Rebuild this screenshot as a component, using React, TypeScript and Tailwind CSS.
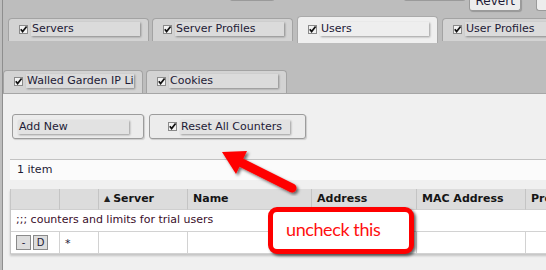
import clsx from 'clsx';

// small checked checkbox used in tabs and buttons
const Check = () => (
  <svg width="9" height="9" viewBox="0 0 9 9" className="shrink-0">
    <rect x="0.5" y="0.5" width="8" height="8" fill="#f2f2f2" stroke="#8a8a8a" />
    <path d="M1.8 4.2 L3.6 6.6 L7.6 1.4" fill="none" stroke="#111" strokeWidth="1.7" />
  </svg>
);

const Label = ({ children, className }: { children: React.ReactNode; className?: string }) => (
  <span
    className={clsx(
      'block h-[14px] leading-[14px] pl-[1px] overflow-hidden whitespace-nowrap shadow-[1px_1px_2px_rgba(0,0,0,0.35)]',
      className
    )}
  >
    {children}
  </span>
);

interface TabProps {
  label: string;
  active?: boolean;
  className?: string;
}

const Tab = ({ label, active = false, className }: TabProps) => (
  <div
    className={clsx(
      'shrink-0 flex items-start rounded-t-[4px] border border-b-0 pl-[10px] pr-[8px]',
      active
        ? 'h-[27px] pt-[5px] bg-[#efefef] border-[#aaaaaa]'
        : 'h-[23px] mt-[2px] pt-[3px] bg-[#d3d3d3] border-[#a3a3a3]',
      className
    )}
  >
    <span className="mt-[3px]">
      <Check />
    </span>
    <Label className={clsx('ml-[3px] flex-1', active ? 'bg-[#eeeeee]' : 'bg-[#dbdbdb]')}>{label}</Label>
  </div>
);

const COLUMNS = ['', '', 'Server', 'Name', 'Address', 'MAC Address', 'Profile'];

export default function App() {
  return (
    <div className="relative w-[546px] h-[270px] overflow-hidden bg-[#bdbdbd] font-['DejaVu_Sans',sans-serif] text-[11px] text-[#1d1a36]">
      <div className="ml-[2px] h-full border-l border-[#8e8e8e] flex flex-col">
        {/* Toolbar (cut off at the top) */}
        <div className="h-[16px] flex items-start">
          <div className="ml-[227px] w-[46px] h-[2px] -mt-[1px] bg-[#e6e6e6] border border-t-0 border-[#9a9a9a] rounded-b-[3px]" />
          <div className="ml-[130px] w-[64px] h-[2px] -mt-[1px] bg-[#e6e6e6] border border-t-0 border-[#9a9a9a] rounded-b-[3px]" />
          <div className="ml-[4px] w-[55px] h-[12px] -mt-[1px] bg-[#ededed] border border-t-0 border-[#9a9a9a] rounded-b-[3px] shadow-[1px_1px_1px_rgba(0,0,0,0.2)] flex justify-center">
            <span className="-mt-[7px] text-[12px]">Revert</span>
          </div>
          <div className="ml-[15px] w-[10px] h-[12px] -mt-[1px] bg-[#ededed] border border-t-0 border-r-0 border-[#9a9a9a] rounded-bl-[3px]" />
        </div>

        {/* First tab row */}
        <div className="h-[27px] flex items-start gap-[3px] pl-[5px]">
          <Tab label="Servers" className="w-[141px]" />
          <Tab label="Server Profiles" className="w-[141px]" />
          <Tab label="Users" active className="w-[141px] ml-[1px]" />
          <Tab label="User Profiles" className="w-[141px] ml-[1px]" />
        </div>

        <div className="h-[27px]" />

        {/* Second tab row */}
        <div className="h-[23px] flex items-end gap-[3px]">
          <Tab label="Walled Garden IP List" className="w-[140px] !mt-0" />
          <Tab label="Cookies" className="w-[141px] !mt-0" />
        </div>

        {/* Panel */}
        <div className="flex-1 bg-[#f0f0f0] border-t border-[#a6a6a6] pt-[20px]">
          <div className="flex gap-[5px] ml-[9px]">
            <button className="w-[132px] h-[25px] flex items-center pl-[5px] rounded-[3px] border border-[#9c9c9c] bg-[#ececec] shadow-[1px_1px_1px_rgba(0,0,0,0.15)]">
              <Label className="w-[111px] bg-[#e2e2e2] text-left">Add New</Label>
            </button>
            <button className="w-[157px] h-[25px] flex items-center pl-[18px] rounded-[3px] border border-[#9c9c9c] bg-[#ececec] shadow-[1px_1px_1px_rgba(0,0,0,0.15)]">
              <Check />
              <Label className="ml-[3px] w-[110px] bg-[#e2e2e2] text-left">Reset All Counters</Label>
            </button>
          </div>

          <div className="mt-[20px] ml-[7px] h-[21px] border-t border-[#c2c2c2] bg-[#fbfbfb] pl-[7px] flex items-center">
            1 item
          </div>

          {/* Table */}
          <div className="mt-[9px] ml-[7px] border-l border-[#c6c6c6] shadow-[0_2px_2px_rgba(0,0,0,0.18)] w-[560px]">
            <div className="grid grid-cols-[49px_39px_89px_124px_105px_109px_45px] h-[21px] bg-[#dcdcdc] font-bold text-[#151515]">
              {COLUMNS.map((c, i) => (
                <div key={i} className="border-r border-[#c4c4c4] border-b border-b-[#cfcfcf] pl-[5px] flex items-center whitespace-nowrap overflow-hidden">
                  {c === 'Server' && <span className="text-[8px] mr-[3px] text-[#222] font-normal">▲</span>}
                  {c}
                </div>
              ))}
            </div>
            <div className="h-[22px] bg-white border-b border-[#d2d2d2] flex items-center pl-[5px] text-[#3a0e2a]">
              ;;; counters and limits for trial users
            </div>
            <div className="grid grid-cols-[49px_39px_89px_124px_105px_109px_45px] h-[22px] bg-white border-b border-[#d2d2d2]">
              <div className="border-r border-[#d2d2d2] flex items-center gap-[2px] pl-[5px]">
                <span className="w-[15px] h-[15px] border border-[#8a8a8a] bg-[#dddddd] flex items-center justify-center text-[10px] leading-none">-</span>
                <span className="w-[15px] h-[15px] border border-[#8a8a8a] bg-[#dddddd] flex items-center justify-center text-[10px] leading-none">D</span>
              </div>
              <div className="border-r border-[#d2d2d2] pl-[5px] pt-[4px]">*</div>
              <div className="border-r border-[#d2d2d2]" />
              <div className="border-r border-[#d2d2d2]" />
              <div className="border-r border-[#d2d2d2]" />
              <div className="border-r border-[#d2d2d2]" />
              <div />
            </div>
          </div>
        </div>
      </div>

      {/* Annotation arrow */}
      <svg className="absolute left-0 top-0 pointer-events-none" width="546" height="270">
        <defs>
          <filter id="sh" x="-20%" y="-20%" width="140%" height="140%">
            <feDropShadow dx="2" dy="2" stdDeviation="1.5" floodColor="#000" floodOpacity="0.55" />
          </filter>
        </defs>
        <g filter="url(#sh)">
          <line x1="240" y1="162" x2="292" y2="188" stroke="#ff0000" strokeWidth="9" strokeLinecap="round" />
          <polygon points="222,152 247,151 236,174" fill="#ff0000" />
        </g>
      </svg>

      {/* Callout */}
      <div className="absolute left-[268px] top-[207px] w-[146px] h-[47px] rounded-[9px] border-[5px] border-[#ff0000] bg-white shadow-[2px_2px_3px_rgba(0,0,0,0.6)] flex items-center pl-[13px]">
        <span className="font-['Lato',sans-serif] text-[18px] tracking-[-0.4px] text-[#ff1010] -mt-[2px]">uncheck this</span>
      </div>
    </div>
  );
}
